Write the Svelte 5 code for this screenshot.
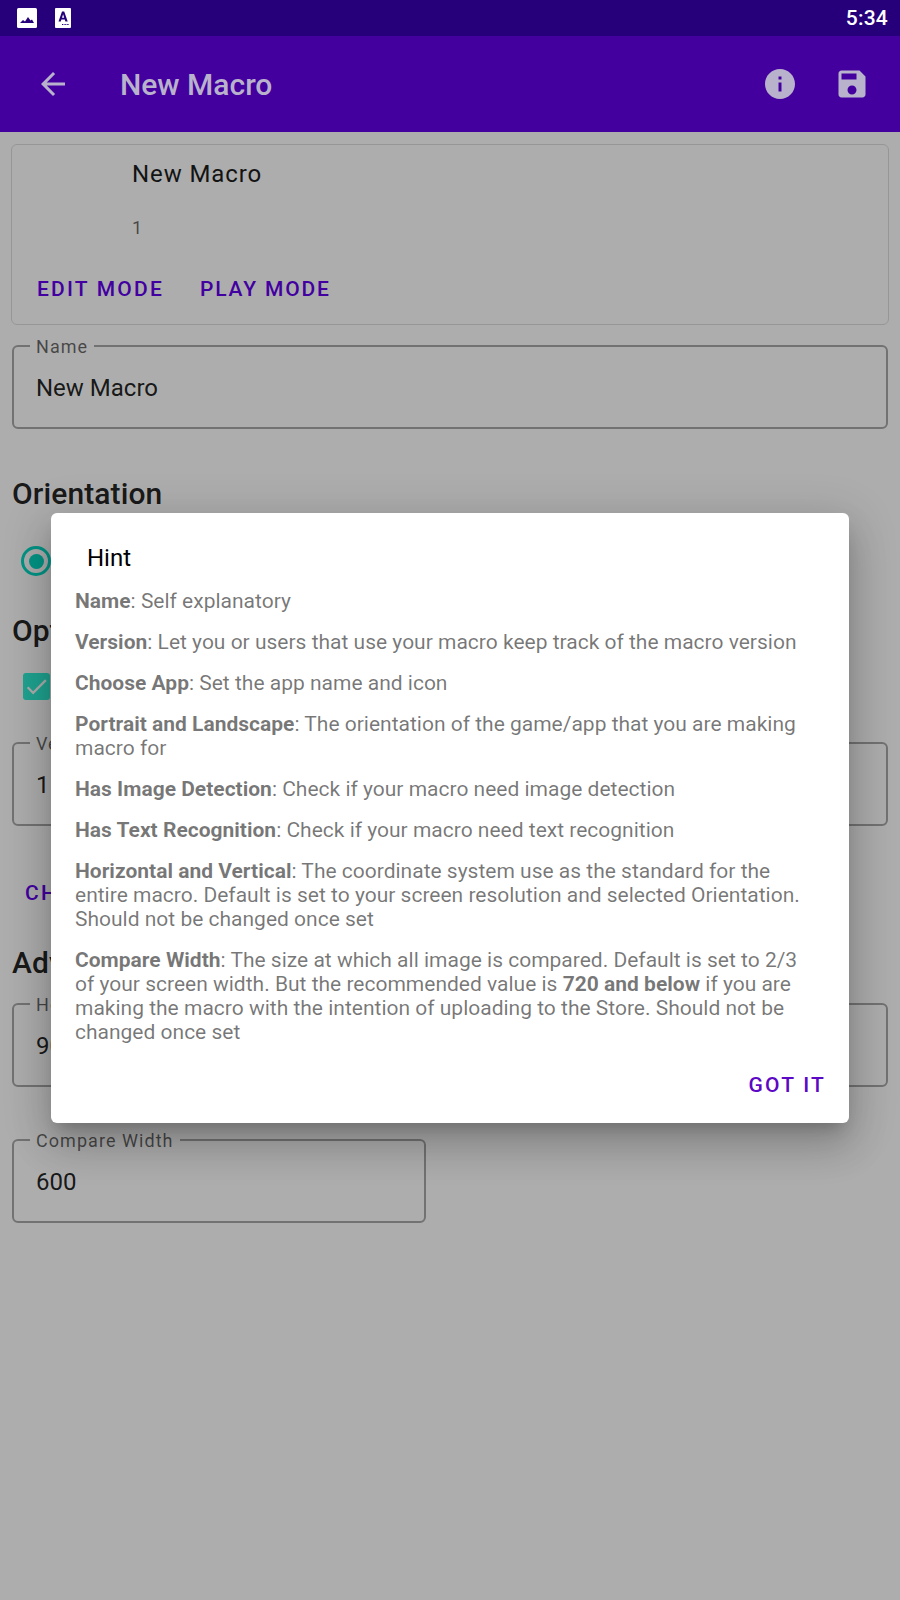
<script>
  const helpItems = [
    { id: 'name', title: 'Name', body: ': Self explanatory' },
    { id: 'version', title: 'Version', body: ': Let you or users that use your macro keep track of the macro version' },
    { id: 'app', title: 'Choose App', body: ': Set the app name and icon' },
    { id: 'orientation', title: 'Portrait and Landscape', body: ': The orientation of the game/app that you are making macro for' },
    { id: 'image', title: 'Has Image Detection', body: ': Check if your macro need image detection' },
    { id: 'text', title: 'Has Text Recognition', body: ': Check if your macro need text recognition' },
    { id: 'axes', title: 'Horizontal and Vertical', body: ': The coordinate system use as the standard for the entire macro. Default is set to your screen resolution and selected Orientation. Should not be changed once set' }
  ];
</script>

<div class="screen">
  <header class="status">
    <div class="status-icons">
      <svg class="st-image" viewBox="0 0 20 20" aria-hidden="true"><rect width="20" height="20" rx="1.5" fill="#fff"/><path d="M3 15l3-3 2 1.5L11 9l2.5 3.5 1.5-1 2 3.500z" fill="#25007a"/></svg>
      <svg class="st-a" viewBox="0 0 16 20" aria-hidden="true"><path d="M1 0h14a1 1 0 0 1 1 1v18a1 1 0 0 1-1 1H1a1 1 0 0 1-1-1V1a1 1 0 0 1 1-1z" fill="#fff"/><path d="M3.500 13.500L7 3.500h2.200l3.500 10h-2.300l-.6-1.900H6.400l-.6 1.900zM7 9.800h2.200L8.100 6.300z" fill="#25007a"/><path d="M7 16.500h7" stroke="#25007a" stroke-width="1.200" stroke-dasharray="1 .6"/></svg>
    </div>
    <span class="clock">5:34</span>
  </header>

  <nav class="appbar">
    <svg class="i-back" viewBox="0 0 24 24" aria-hidden="true"><path d="M20 11H7.830l5.590-5.590L12 4l-8 8 8 8 1.410-1.410L7.830 13H20v-2z"/></svg>
    <h1>New Macro</h1>
    <span class="spacer"></span>
    <svg class="i-info" viewBox="0 0 24 24" aria-hidden="true"><path d="M12 2C6.480 2 2 6.480 2 12s4.480 10 10 10 10-4.480 10-10S17.520 2 12 2zm1 15h-2v-6h2v6zm0-8h-2V7h2v2z"/></svg>
    <svg class="i-save" viewBox="0 0 24 24" aria-hidden="true"><path d="M17 3H5c-1.110 0-2 .9-2 2v14c0 1.100.89 2 2 2h14c1.100 0 2-.9 2-2V7l-4-4zm-5 16c-1.660 0-3-1.340-3-3s1.340-3 3-3 3 1.340 3 3-1.340 3-3 3zm3-10H5V5h10v4z"/></svg>
  </nav>

  <main class="content">
    <section class="card">
      <div class="card-title">New Macro</div>
      <div class="card-sub">1</div>
      <div class="card-actions">
        <span class="btn">EDIT MODE</span>
        <span class="btn play">PLAY MODE</span>
      </div>
    </section>

    <div class="field name-field">
      <span class="label">Name</span>
      <span class="value">New Macro</span>
    </div>

    <h2 class="orientation">Orientation</h2>
    <div class="radio"><span class="dot"></span></div>

    <h2 class="options">Options</h2>
    <div class="check">
      <svg viewBox="0 0 24 24" aria-hidden="true"><path d="M9 16.170L4.830 12l-1.420 1.410L9 19 21 7l-1.410-1.410z"/></svg>
    </div>

    <div class="field version-field">
      <span class="label">Version</span>
      <span class="value">1</span>
    </div>

    <span class="btn choose">CHOOSE APP</span>

    <h2 class="advanced">Advanced</h2>
    <div class="grid">
      <div class="field">
        <span class="label">Horizontal</span>
        <span class="value">900</span>
      </div>
      <div class="field">
        <span class="label">Vertical</span>
        <span class="value">1600</span>
      </div>
      <div class="field compare">
        <span class="label">Compare Width</span>
        <span class="value">600</span>
      </div>
    </div>
  </main>

  <div class="scrim"></div>

  <div class="dialog">
    <div class="dialog-title">Hint</div>
    <div class="dialog-body">
      {#each helpItems as item (item.id)}
        <p><b>{item.title}</b>{item.body}</p>
      {/each}
      <p><b>Compare Width</b>: The size at which all image is compared. Default is set to 2/3 of your screen width. But the recommended value is <b>720 and below</b> if you are making the macro with the intention of uploading to the Store. Should not be changed once set</p>
    </div>
    <div class="dialog-actions"><span class="btn got">GOT IT</span></div>
  </div>
</div>

<style>
  :global(body) {
    margin: 0;
    background: #fff;
  }
  .screen {
    position: relative;
    width: 900px;
    height: 1600px;
    overflow: hidden;
    background: #fff;
    font-family: Roboto, "Liberation Sans", sans-serif;
    color: #000;
  }
  .status {
    position: relative;
    z-index: 3;
    height: 36px;
    background: #25007a;
    display: flex;
    align-items: center;
    justify-content: space-between;
    padding: 0 12px 0 17px;
  }
  .status-icons {
    display: flex;
    align-items: center;
    gap: 18px;
  }
  .st-image { width: 20px; height: 20px; }
  .st-a { width: 16px; height: 20px; }
  .clock {
    color: #fff;
    font-size: 21px;
    font-weight: 500;
    letter-spacing: 0.2px;
  }
  .appbar {
    position: relative;
    z-index: 3;
    height: 96px;
    background: #43009f;
    display: flex;
    align-items: center;
    color: #b9b2cc;
    padding: 0 30px 0 35px;
  }
  .appbar svg { fill: #b9b2cc; }
  .i-back { width: 36px; height: 36px; }
  .appbar h1 {
    margin: 0 0 0 49px;
    font-size: 30px;
    font-weight: 500;
    letter-spacing: 0;
  }
  .spacer { flex: 1; }
  .i-info { width: 36px; height: 36px; margin-right: 36px; }
  .i-save { width: 36px; height: 36px; }
  .content {
    padding: 12px 12px 0;
    display: flex;
    flex-direction: column;
  }
  .card {
    height: 181px;
    margin: 0 -1px;
    box-sizing: border-box;
    border: 1px solid #dedede;
    border-radius: 6px;
    padding: 0 0 0 25px;
    display: flex;
    flex-direction: column;
  }
  .card-title {
    margin: 15px 0 0 95px;
    font-size: 24px;
    line-height: 28px;
    letter-spacing: 0.9px;
    color: #1d1d1d;
  }
  .card-sub {
    margin: 28px 0 0 95px;
    font-size: 18px;
    line-height: 24px;
    color: rgba(0, 0, 0, 0.6);
  }
  .card-actions {
    margin-top: 36px;
    display: flex;
    gap: 36px;
  }
  .btn {
    font-size: 21px;
    font-weight: 500;
    letter-spacing: 2.2px;
    line-height: 26px;
    color: #6200ee;
  }
  .play { letter-spacing: 1.850px; }
  .field {
    position: relative;
    box-sizing: border-box;
    height: 84px;
    border: 2px solid rgba(0, 0, 0, 0.34);
    border-radius: 6px;
    padding: 2px 22px 0;
    display: flex;
    align-items: center;
  }
  .label {
    position: absolute;
    left: 16px;
    top: -11px;
    padding: 0 6px;
    background: #fff;
    font-size: 18px;
    line-height: 21px;
    letter-spacing: 1.050px;
    color: rgba(0, 0, 0, 0.6);
  }
  .value {
    font-size: 24px;
    color: rgba(0, 0, 0, 0.87);
  }
  .name-field { margin-top: 20px; }
  h2 {
    margin: 0;
    font-size: 30px;
    font-weight: 500;
    line-height: 36px;
    letter-spacing: 0.1px;
    color: rgba(0, 0, 0, 0.87);
  }
  .orientation { margin-top: 47px; }
  .radio {
    margin: 34px 0 0 9px;
    box-sizing: border-box;
    width: 30px;
    height: 30px;
    border: 3px solid #03dac5;
    border-radius: 50%;
    display: flex;
    align-items: center;
    justify-content: center;
  }
  .dot {
    width: 15px;
    height: 15px;
    border-radius: 50%;
    background: #03dac5;
  }
  .options { margin-top: 37px; }
  .check {
    margin: 24px 0 0 11px;
    width: 27px;
    height: 27px;
    border-radius: 3px;
    background: #2ef0d4;
    display: flex;
    align-items: center;
    justify-content: center;
  }
  .check svg { width: 27px; height: 27px; fill: #fff; }
  .version-field { margin-top: 42px; }
  .choose { margin: 54px 0 0 13px; }
  .advanced { margin-top: 39px; }
  .grid {
    margin-top: 22px;
    display: grid;
    grid-template-columns: 414px 437px;
    column-gap: 25px;
    row-gap: 52px;
  }
  .scrim {
    position: absolute;
    inset: 0;
    z-index: 1;
    background: rgba(0, 0, 0, 0.32);
  }
  .dialog {
    position: absolute;
    z-index: 2;
    left: 51px;
    top: 513px;
    width: 798px;
    height: 610px;
    box-sizing: border-box;
    background: #fff;
    border-radius: 6px;
    box-shadow: 0 24px 38px 3px rgba(0, 0, 0, 0.14), 0 9px 46px 8px rgba(0, 0, 0, 0.12), 0 11px 15px -7px rgba(0, 0, 0, 0.2);
    padding: 0 24px;
    display: flex;
    flex-direction: column;
  }
  .dialog-title {
    margin: 30px 0 0 12px;
    font-size: 24px;
    line-height: 30px;
    color: #000;
  }
  .dialog-body {
    margin-top: 15.500px;
    padding-right: 9px;
    font-size: 21px;
    line-height: 24px;
    color: rgba(0, 0, 0, 0.54);
  }
  .dialog-body p { margin: 0 0 17px; }
  .dialog-body b { font-weight: 700; }
  .dialog-actions {
    margin-top: auto;
    margin-right: -1px;
    padding-bottom: 25px;
    display: flex;
    justify-content: flex-end;
  }
  .got { color: #5c08c4; }
</style>
